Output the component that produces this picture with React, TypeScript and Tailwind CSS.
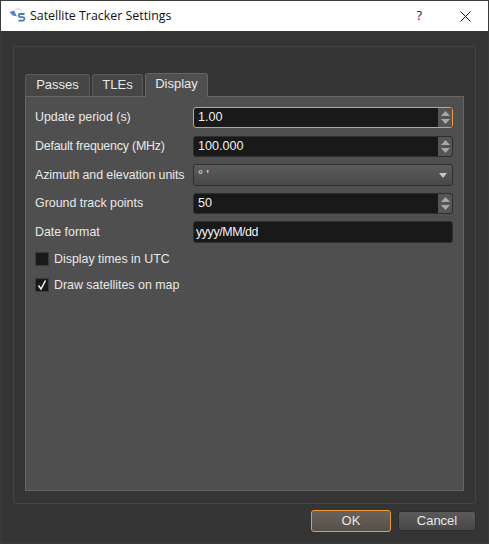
import React from "react";

const font = "font-['Liberation_Sans',sans-serif] text-[12.4px] text-[#e8e8e8]";

function SpinArrows() {
  return (
    <div className="flex w-[14px] flex-col items-center justify-center gap-[3px] self-stretch bg-[#555555] rounded-r-[2px]">
      <svg width="9" height="5" viewBox="0 0 9 5">
        <path d="M4.5 0 L9 5 L0 5 Z" fill="#a8a8a8" />
      </svg>
      <svg width="9" height="5" viewBox="0 0 9 5">
        <path d="M0 0 L9 0 L4.5 5 Z" fill="#a8a8a8" />
      </svg>
    </div>
  );
}

function SpinBox({ value, focused }: { value: string; focused?: boolean }) {
  return (
    <div
      className={
        "flex h-[21px] items-center justify-between rounded-[3px] border bg-[#191919] " +
        (focused ? "border-[#f09a36]" : "border-[#2f2f2f]")
      }
    >
      <span className="pl-[4px] text-[12.6px] text-[#f0f0f0]">{value}</span>
      <SpinArrows />
    </div>
  );
}

function Row({
  label,
  children,
  className,
  labelClass,
}: {
  label: string;
  children: React.ReactNode;
  className?: string;
  labelClass?: string;
}) {
  return (
    <div className={"flex items-center " + (className ?? "")}>
      <span className={"w-[158px] shrink-0 whitespace-nowrap " + (labelClass ?? "")}>{label}</span>
      <div className="min-w-0 flex-1">{children}</div>
    </div>
  );
}

function Check({ label, checked }: { label: string; checked?: boolean }) {
  return (
    <div className="flex h-[14px] items-center gap-[5px]">
      <div className="flex h-[14px] w-[14px] items-center justify-center border border-[#3a3a3a] bg-[#191919]">
        {checked && (
          <svg width="12" height="12" viewBox="0 0 12 12">
            <path d="M2.5 6.5 L5 10 L9.5 1.5" fill="none" stroke="#ececec" strokeWidth="1.6" />
          </svg>
        )}
      </div>
      <span>{label}</span>
    </div>
  );
}

function Tab({ label, width, active }: { label: string; width: string; active?: boolean }) {
  if (active) {
    return (
      <div
        className={
          "z-10 mb-[-1px] flex h-[24px] items-center justify-center rounded-t-[3px] border border-b-0 border-[#656565] bg-[#4f4f4f] pb-[3px] text-[13px] text-[#e8e8e8] " +
          width
        }
      >
        {label}
      </div>
    );
  }
  return (
    <div
      className={
        "mt-[2px] flex h-[22px] items-center justify-center rounded-t-[3px] border border-b-0 border-[#5a5a5a] bg-[#464646] pb-[1px] text-[13px] text-[#e8e8e8] " +
        width
      }
    >
      {label}
    </div>
  );
}

export default function App() {
  return (
    <div className={"flex h-[544px] w-[489px] flex-col border border-[#3a3a3a] bg-[#353535] " + font}>
      <div className="flex h-[30px] shrink-0 items-center bg-white pl-[8px] text-black">
        <svg width="18" height="16" viewBox="0 0 18 16" className="shrink-0">
          <path d="M0.5 4 L5 2.5 L8 8.5 L3.5 7.5 Z" fill="#5f86bd" />
          <path d="M6 1.5 Q10 -0.5 13 2.5" fill="none" stroke="#b9cbe3" strokeWidth="1" />
          <path
            d="M15.5 6 H11 Q9.8 6 9.8 7.5 T11 9.2 H14 Q15.4 9.2 15.4 10.8 T14 12.6 H9.5"
            fill="none"
            stroke="#4a7ab5"
            strokeWidth="1.8"
          />
        </svg>
        <span className="ml-[3px] font-['Open_Sans',sans-serif] text-[12.4px] text-[#111111]">
          Satellite Tracker Settings
        </span>
        <span className="ml-auto mr-[38px] font-['Open_Sans',sans-serif] text-[13px] text-[#222222]">?</span>
        <svg width="11" height="11" viewBox="0 0 11 11" className="mr-[17px]">
          <path d="M0.5 0.5 L10.5 10.5 M10.5 0.5 L0.5 10.5" stroke="#111111" strokeWidth="1" />
        </svg>
      </div>

      <div className="flex min-h-0 flex-1 flex-col px-[12px] pb-[11px] pt-[15px]">
        <div className="flex h-[458px] flex-col rounded-[2px] border border-[#434343] px-[11px] pb-[12px] pt-[25px]">
          <div className="flex items-end gap-[2px] pl-0">
            <Tab label="Passes" width="w-[65px]" />
            <Tab label="TLEs" width="w-[51px]" />
            <Tab label="Display" width="w-[63px]" active />
          </div>
          <div className="flex flex-1 flex-col border border-[#656565] bg-[#4f4f4f] pl-[9px] pr-[10px] pt-[10px]">
            <Row label="Update period (s)">
              <SpinBox value="1.00" focused />
            </Row>
            <Row label="Default frequency (MHz)" className="mt-[8px]" labelClass="tracking-[-0.2px]">
              <SpinBox value="100.000" />
            </Row>
            <Row label="Azimuth and elevation units" className="mt-[7px]" labelClass="tracking-[-0.08px]">
              <div className="flex h-[22px] items-center justify-between rounded-[3px] border border-[#2f2f2f] bg-gradient-to-b from-[#5c5c5c] to-[#484848] pl-[4px] pr-[5px]">
                <span>° '</span>
                <svg width="8" height="5" viewBox="0 0 8 5">
                  <path d="M0 0 H8 L4 5 Z" fill="#c8c8c8" />
                </svg>
              </div>
            </Row>
            <Row label="Ground track points" className="mt-[7px]">
              <SpinBox value="50" />
            </Row>
            <Row label="Date format" className="mt-[7px]">
              <div className="flex h-[22px] items-center rounded-[3px] border border-[#2f2f2f] bg-[#191919] pl-[2px] tracking-[-0.4px] text-[#f0f0f0]">
                yyyy/MM/dd
              </div>
            </Row>
            <div className="mt-[9px]">
              <Check label="Display times in UTC" />
            </div>
            <div className="mt-[12px]">
              <Check label="Draw satellites on map" checked />
            </div>
          </div>
        </div>

        <div className="mt-[6px] flex items-center justify-end gap-[7px]">
          <div className="flex h-[22px] w-[80px] items-center justify-center rounded-[3px] border border-[#f09a36] bg-gradient-to-b from-[#68625a] to-[#55504a] text-[13px]">
            OK
          </div>
          <div className="flex h-[20px] w-[78px] items-center justify-center rounded-[3px] border border-[#2f2f2f] bg-gradient-to-b from-[#5a5a5a] to-[#484848] text-[13px]">
            Cancel
          </div>
        </div>
      </div>
    </div>
  );
}
